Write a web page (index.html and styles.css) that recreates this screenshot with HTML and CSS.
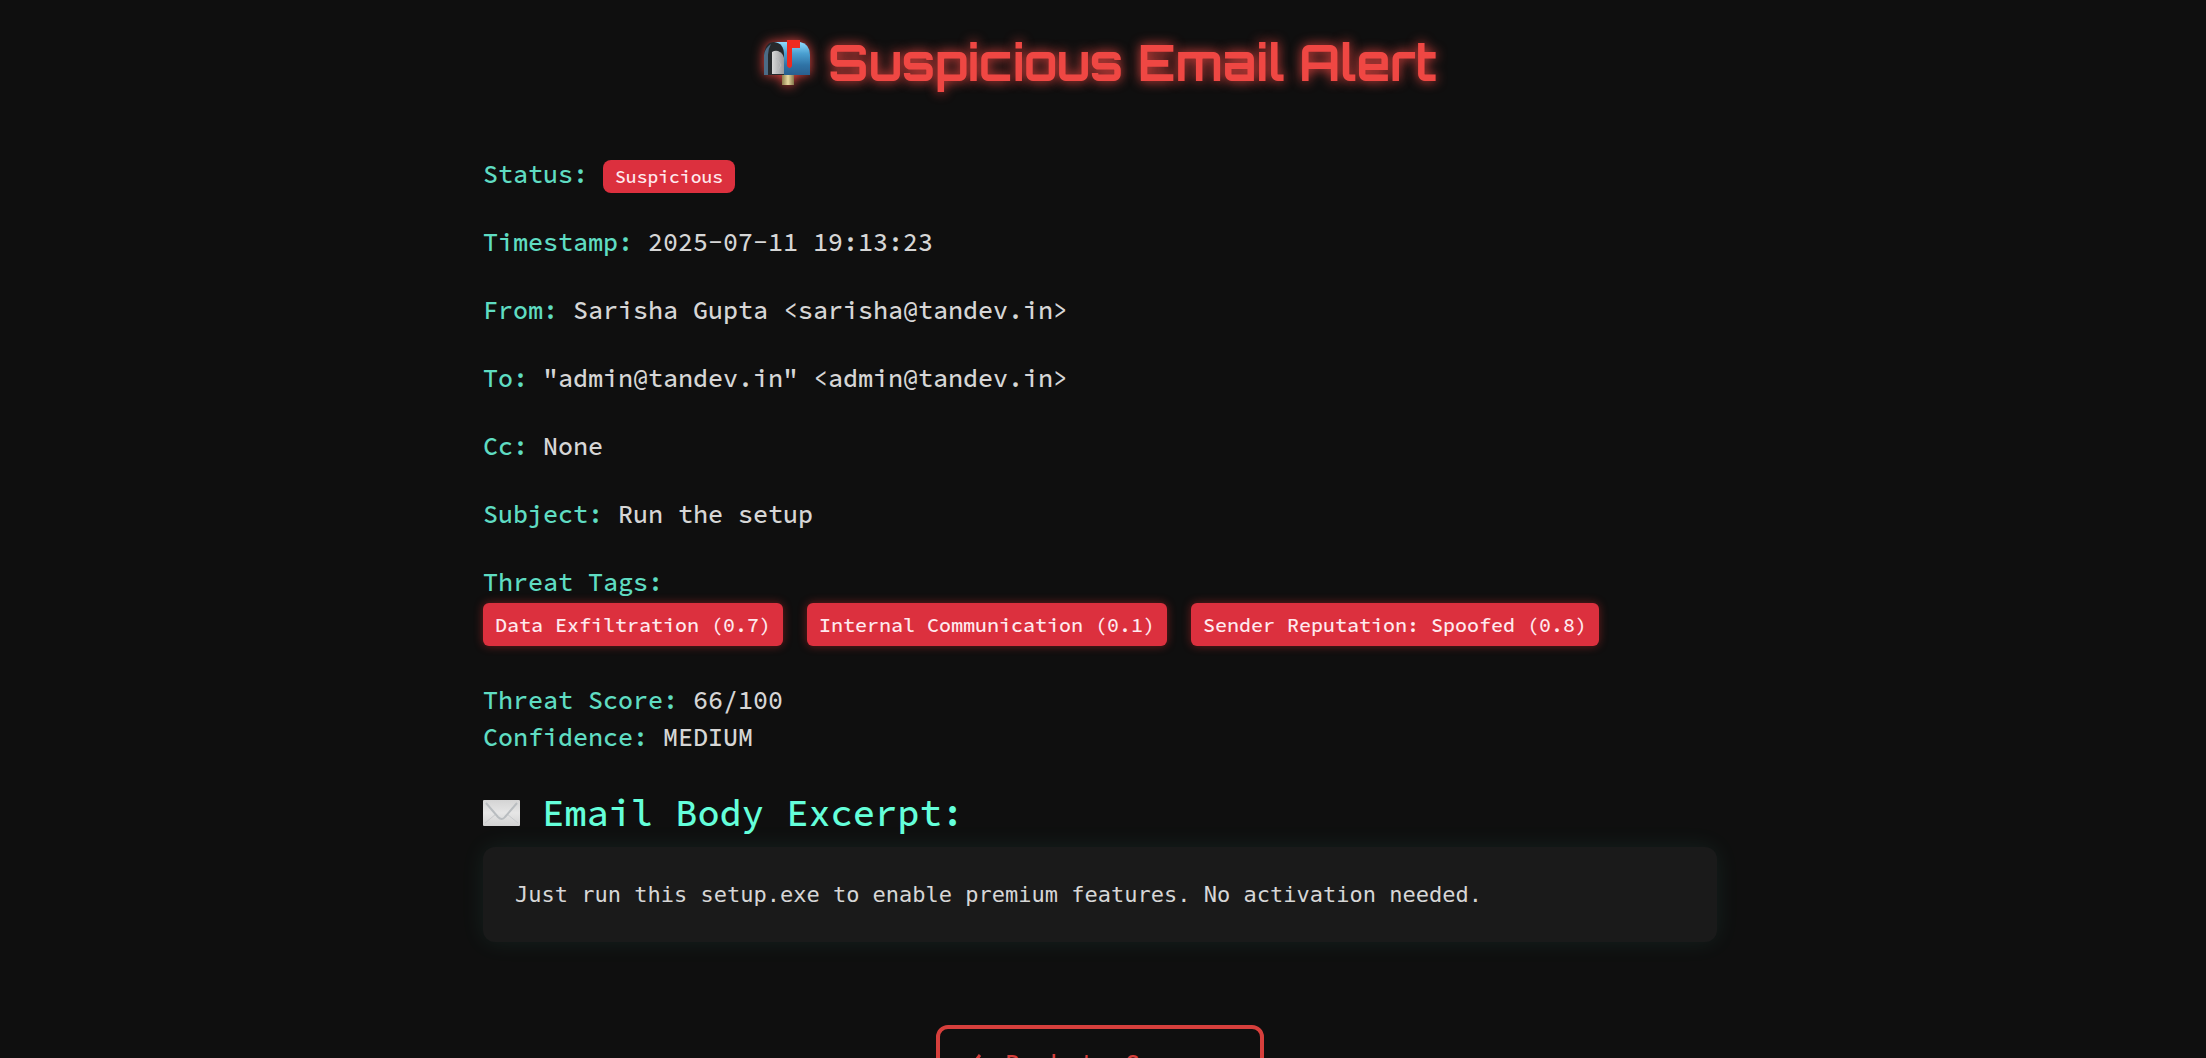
FILE: index.html
```
<!DOCTYPE html>
<html lang="en">
<head>
    <meta charset="UTF-8">
    <meta name="viewport" content="width=device-width, initial-scale=1.0">
    <title>Suspicious Email Alert</title>
    <link rel="stylesheet" href="styles.css">
</head>
<body>

    <div class="container">
        <h1>
            <svg class="mailbox" viewBox="0 0 48 48" aria-hidden="true">
                <defs>
                    <linearGradient id="box" x1="0" y1="0" x2="0" y2="1">
                        <stop offset="0" stop-color="#8fdcff"/>
                        <stop offset="0.35" stop-color="#4a9fd0"/>
                        <stop offset="0.7" stop-color="#2f73a6"/>
                        <stop offset="1" stop-color="#2a5f8e"/>
                    </linearGradient>
                    <linearGradient id="inside" x1="0" y1="0" x2="1" y2="0">
                        <stop offset="0" stop-color="#d8d8d8"/>
                        <stop offset="1" stop-color="#97999c"/>
                    </linearGradient>
                    <linearGradient id="post" x1="0" y1="0" x2="1" y2="0">
                        <stop offset="0" stop-color="#8d7c4c"/>
                        <stop offset="0.5" stop-color="#e6d9a0"/>
                        <stop offset="1" stop-color="#85754a"/>
                    </linearGradient>
                </defs>
                <rect x="19" y="35" width="12" height="12" fill="url(#post)"/>
                <path d="M11 4h26q10 2 10 13v20H14z" fill="url(#box)"/>
                <path d="M1 37V17Q2 4 11 4q10 1 10 13v20z" fill="#26292c"/>
                <path d="M1 17v20h4V17q0-6 3-11Q2 10 1 17z" fill="#4c6b86"/>
                <path d="M9 36V14q3-2 6-1 5 2 6 7v16z" fill="url(#inside)"/>
                <path d="M13 20l5 7-5 8" fill="none" stroke="#b9bbbe"/>
                <path d="M24 2h13v8h-8v18q-2 4-5 0z" fill="#ee2a1f"/>
            </svg>
            Suspicious Email Alert
        </h1>

        <p><strong>Status:</strong> <span class="badge">Suspicious</span></p>
        <p><strong>Timestamp:</strong> 2025-07-11 19:13:23</p>
        <p><strong>From:</strong> Sarisha Gupta &lt;sarisha@tandev.in&gt;</p>
        <p><strong>To:</strong> "admin@tandev.in" &lt;admin@tandev.in&gt;</p>
        <p><strong>Cc:</strong> None</p>
        <p><strong>Subject:</strong> Run the setup</p>

        <div class="threat-tags">
            <strong>Threat Tags:</strong>
            <div class="tags">
                <span class="tag">Data Exfiltration (0.7)</span>
                <span class="tag">Internal Communication (0.1)</span>
                <span class="tag">Sender Reputation: Spoofed (0.8)</span>
            </div>
        </div>

        <p>
            <strong>Threat Score:</strong> 66/100<br>
            <strong>Confidence:</strong> MEDIUM
        </p>

        <h2>
            <svg class="envelope" viewBox="0 0 37 26" aria-hidden="true">
                <defs>
                    <linearGradient id="paper" x1="0" y1="0" x2="0" y2="1">
                        <stop offset="0" stop-color="#d4d4d4"/>
                        <stop offset="0.5" stop-color="#e6e6e6"/>
                        <stop offset="1" stop-color="#d2d2d2"/>
                    </linearGradient>
                </defs>
                <rect width="37" height="26" rx="1" fill="url(#paper)"/>
                <path d="M2 23l11-9M35 23l-11-9" stroke="#c9cbcd" fill="none"/>
                <path d="M3 3l12 14q4 4 7 0L34 3" stroke="#b9bdc0" stroke-width="2" fill="none"/>
            </svg>
            Email Body Excerpt:
        </h2>
        <pre class="email-body">Just run this setup.exe to enable premium features. No activation needed.</pre>

        <div class="actions">
            <a class="back-button" href="#">
                <svg class="arrow" viewBox="0 0 20 20" aria-hidden="true">
                    <path d="M10 1L3 10l7 9M3 10h16" fill="none" stroke="currentColor" stroke-width="3"/>
                </svg>
                Back to Summary
            </a>
        </div>
    </div>

</body>
</html>
```

FILE: styles.css
```
:root {
    --background-color: #0f0f0f;
    --panel-color: #1a1a1a;
    --text-color: #d6d6d6;
    --accent-color: #64ffda;
    --label-color: #5fdcc2;
    --alert-color: #ef4743;
    --tag-color: #dc303e;
}

* {
    box-sizing: border-box;
}

body {
    margin: 0;
    padding: 30px 6px 48px 0;
    background-color: var(--background-color);
    color: var(--text-color);
    font-family: "Source Code Pro", "Liberation Mono", monospace;
    font-size: 25px;
    font-weight: 500;
    line-height: 37px;
}

.container {
    max-width: 1234px;
    margin: 0 auto;
}

h1 {
    display: flex;
    align-items: center;
    justify-content: center;
    gap: 17px;
    margin: 0 0 62px;
    font-family: "Orbitron", "Inter", sans-serif;
    font-size: 49px;
    font-weight: 700;
    line-height: 64px;
    color: var(--alert-color);
    text-shadow: 0 0 12px var(--alert-color);
}

.mailbox {
    width: 48px;
    height: 48px;
    filter: drop-shadow(0 0 6px var(--alert-color));
}

p {
    margin: 0 0 31px;
}

strong {
    font-weight: 500;
    color: var(--label-color);
}

.badge {
    display: inline-block;
    padding: 4px 12px;
    border-radius: 8px;
    background-color: var(--tag-color);
    color: #ffe9ee;
    font-size: 18px;
    line-height: 25px;
}

.threat-tags {
    margin-bottom: 36px;
}

.tags {
    display: flex;
    flex-wrap: wrap;
    gap: 24px;
    margin-top: 2px;
}

.tag {
    padding: 8px 12px;
    border-radius: 6px;
    background-color: var(--tag-color);
    box-shadow: 0 0 10px rgba(255, 50, 50, 0.4);
    color: #ffe9ee;
    font-size: 20px;
    line-height: 27px;
}

h2 {
    display: flex;
    align-items: center;
    gap: 22px;
    margin: 0 0 8px;
    font-size: 37px;
    font-weight: 500;
    line-height: 52px;
    color: var(--accent-color);
}

.envelope {
    width: 37px;
    height: 26px;
}

.email-body {
    margin: 0;
    padding: 32px;
    border-radius: 12px;
    background-color: var(--panel-color);
    box-shadow: 0 0 24px rgba(100, 255, 218, 0.08);
    font-family: "Menlo", "DejaVu Sans Mono", monospace;
    font-size: 22px;
    line-height: 31px;
    white-space: pre-wrap;
}

.actions {
    display: flex;
    justify-content: center;
    margin-top: 83px;
}

.back-button {
    display: flex;
    align-items: center;
    gap: 15px;
    padding: 16px 30px;
    border: 4px solid #d63f3c;
    border-radius: 12px;
    color: #d63f3c;
    text-decoration: none;
}

.arrow {
    width: 20px;
    height: 20px;
}
```
